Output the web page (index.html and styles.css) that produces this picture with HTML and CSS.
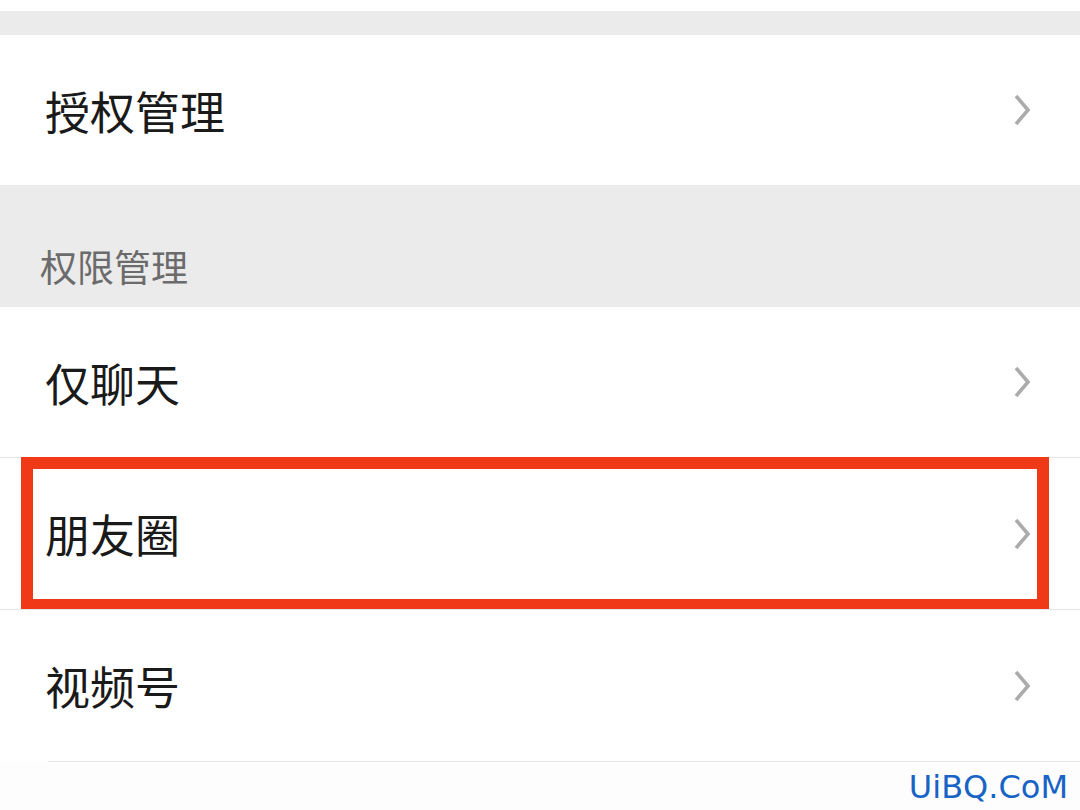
FILE: index.html
```html
<!DOCTYPE html>
<html lang="zh-CN">
<head>
    <meta charset="UTF-8">
    <meta name="viewport" content="width=device-width, initial-scale=1.0">
    <title>权限管理</title>
    <link rel="stylesheet" href="styles.css">
</head>
<body>

<div class="page">
    <!-- top spacing -->
    <div class="top-space"></div>
    <div class="gap-bar"></div>

    <div class="row">
        <span class="row-title">授权管理</span>
        <svg class="chevron" viewBox="0 0 18 34"><path d="M3 3 L15 17 L3 31"/></svg>
    </div>

    <!-- Section header -->
    <div class="section-header">权限管理</div>

    <div class="row">
        <span class="row-title">仅聊天</span>
        <svg class="chevron" viewBox="0 0 18 34"><path d="M3 3 L15 17 L3 31"/></svg>
    </div>
    <div class="row with-line">
        <span class="row-title">朋友圈</span>
        <svg class="chevron" viewBox="0 0 18 34"><path d="M3 3 L15 17 L3 31"/></svg>
        <div class="highlight"></div>
    </div>
    <div class="row with-line">
        <span class="row-title">视频号</span>
        <svg class="chevron" viewBox="0 0 18 34"><path d="M3 3 L15 17 L3 31"/></svg>
    </div>
    <div class="bottom-line"></div>

    <div class="watermark">UiBQ.CoM</div>
</div>

</body>
</html>
```

FILE: styles.css
```css
body {
    margin: 0;
    background-color: #fcfcfc;
    font-family: "Noto Sans CJK SC", "Noto Sans", sans-serif;
}

.page {
    position: relative;
    width: 1080px;
    height: 810px;
    overflow: hidden;
    background-color: #fdfdfd;
}

.top-space {
    height: 11px;
    background-color: #ffffff;
}

.gap-bar {
    height: 24px;
    background-color: #ebebeb;
}

.row {
    position: relative;
    display: flex;
    align-items: center;
    justify-content: space-between;
    height: 150px;
    padding: 0 49px 0 45px;
    background-color: #ffffff;
}

.row + .row {
    height: 151px;
}

.with-line {
    border-top: 1px solid #e6e6e6;
}

.row-title {
    font-size: 45px;
    line-height: 45px;
    color: #1a1a1a;
}

.chevron {
    width: 18px;
    height: 34px;
}

.chevron path {
    fill: none;
    stroke: #ababab;
    stroke-width: 3.6;
}

.section-header {
    display: flex;
    align-items: flex-end;
    height: 122px;
    padding: 0 0 22px 40px;
    box-sizing: border-box;
    background-color: #ebebeb;
    font-size: 37px;
    line-height: 37px;
    color: #6b6b6b;
}

/* red highlight box over the moments row */
.highlight {
    position: absolute;
    left: 21px;
    top: -1px;
    width: 1004px;
    height: 130px;
    border: 12px solid #f03a17;
}

.bottom-line {
    height: 1px;
    margin-left: 48px;
    background-color: #e6e6e6;
}

.watermark {
    position: absolute;
    right: 12px;
    bottom: 7px;
    font-family: "DejaVu Sans", sans-serif;
    font-size: 32px;
    line-height: 32px;
    color: #1763c6;
}
```
